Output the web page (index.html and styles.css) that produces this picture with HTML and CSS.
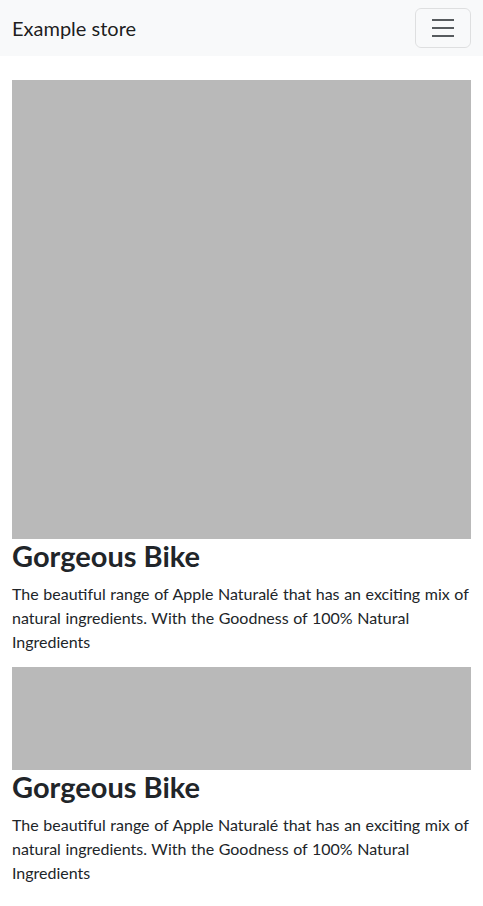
FILE: index.html
```html
<!DOCTYPE html>
<html lang="en">
<head>
<meta charset="utf-8">
<title>Example store</title>
<link rel="stylesheet" href="styles.css">
</head>
<body>
<nav class="navbar">
  <a class="brand" href="#">Example store</a>
  <button class="toggler" type="button" aria-label="Toggle navigation">
    <svg class="toggler-icon" viewBox="0 0 30 30" width="30" height="30"><path d="M4 7h22M4 15h22M4 23h22" stroke="rgba(33,37,41,0.75)" stroke-width="2" stroke-linecap="butt" fill="none"/></svg>
  </button>
</nav>
<main class="container">
  <article class="product">
    <div class="thumb thumb-square"></div>
    <h1 class="title">Gorgeous Bike</h1>
    <p class="desc">The beautiful range of Apple Naturalé that has an exciting mix of natural ingredients. With the Goodness of 100% Natural Ingredients</p>
  </article>
  <article class="product">
    <div class="thumb thumb-short"></div>
    <h1 class="title">Gorgeous Bike</h1>
    <p class="desc">The beautiful range of Apple Naturalé that has an exciting mix of natural ingredients. With the Goodness of 100% Natural Ingredients</p>
  </article>
</main>
</body>
</html>
```
FILE: styles.css
```css
* { box-sizing: border-box; }
body {
  margin: 0;
  font-family: Lato, "Noto Sans", sans-serif;
  font-size: 16px;
  line-height: 1.5;
  color: #212529;
  background: #fff;
}
.navbar {
  height: 56px;
  background: #f8f9fa;
  display: flex;
  align-items: center;
  justify-content: space-between;
  padding: 0 12px;
}
.brand {
  font-size: 20px;
  color: rgba(0,0,0,0.9);
  text-decoration: none;
}
.toggler {
  width: 56px;
  height: 40px;
  border: 1px solid rgba(0,0,0,0.1);
  border-radius: 6px;
  background: transparent;
  display: flex;
  align-items: center;
  justify-content: center;
  padding: 0;
}
.toggler-icon { display: block; }
.container {
  padding: 24px 12px 0;
}
.thumb { background: #b9b9b9; width: 100%; }
.thumb-square { height: 459px; }
.thumb-short { height: 103px; }
.title {
  margin: 0 0 8px;
  font-size: 29px;
  font-weight: 700;
  line-height: 1.2;
}
.desc {
  margin: 0 0 13px;
  word-spacing: 0.5px;
}
```
